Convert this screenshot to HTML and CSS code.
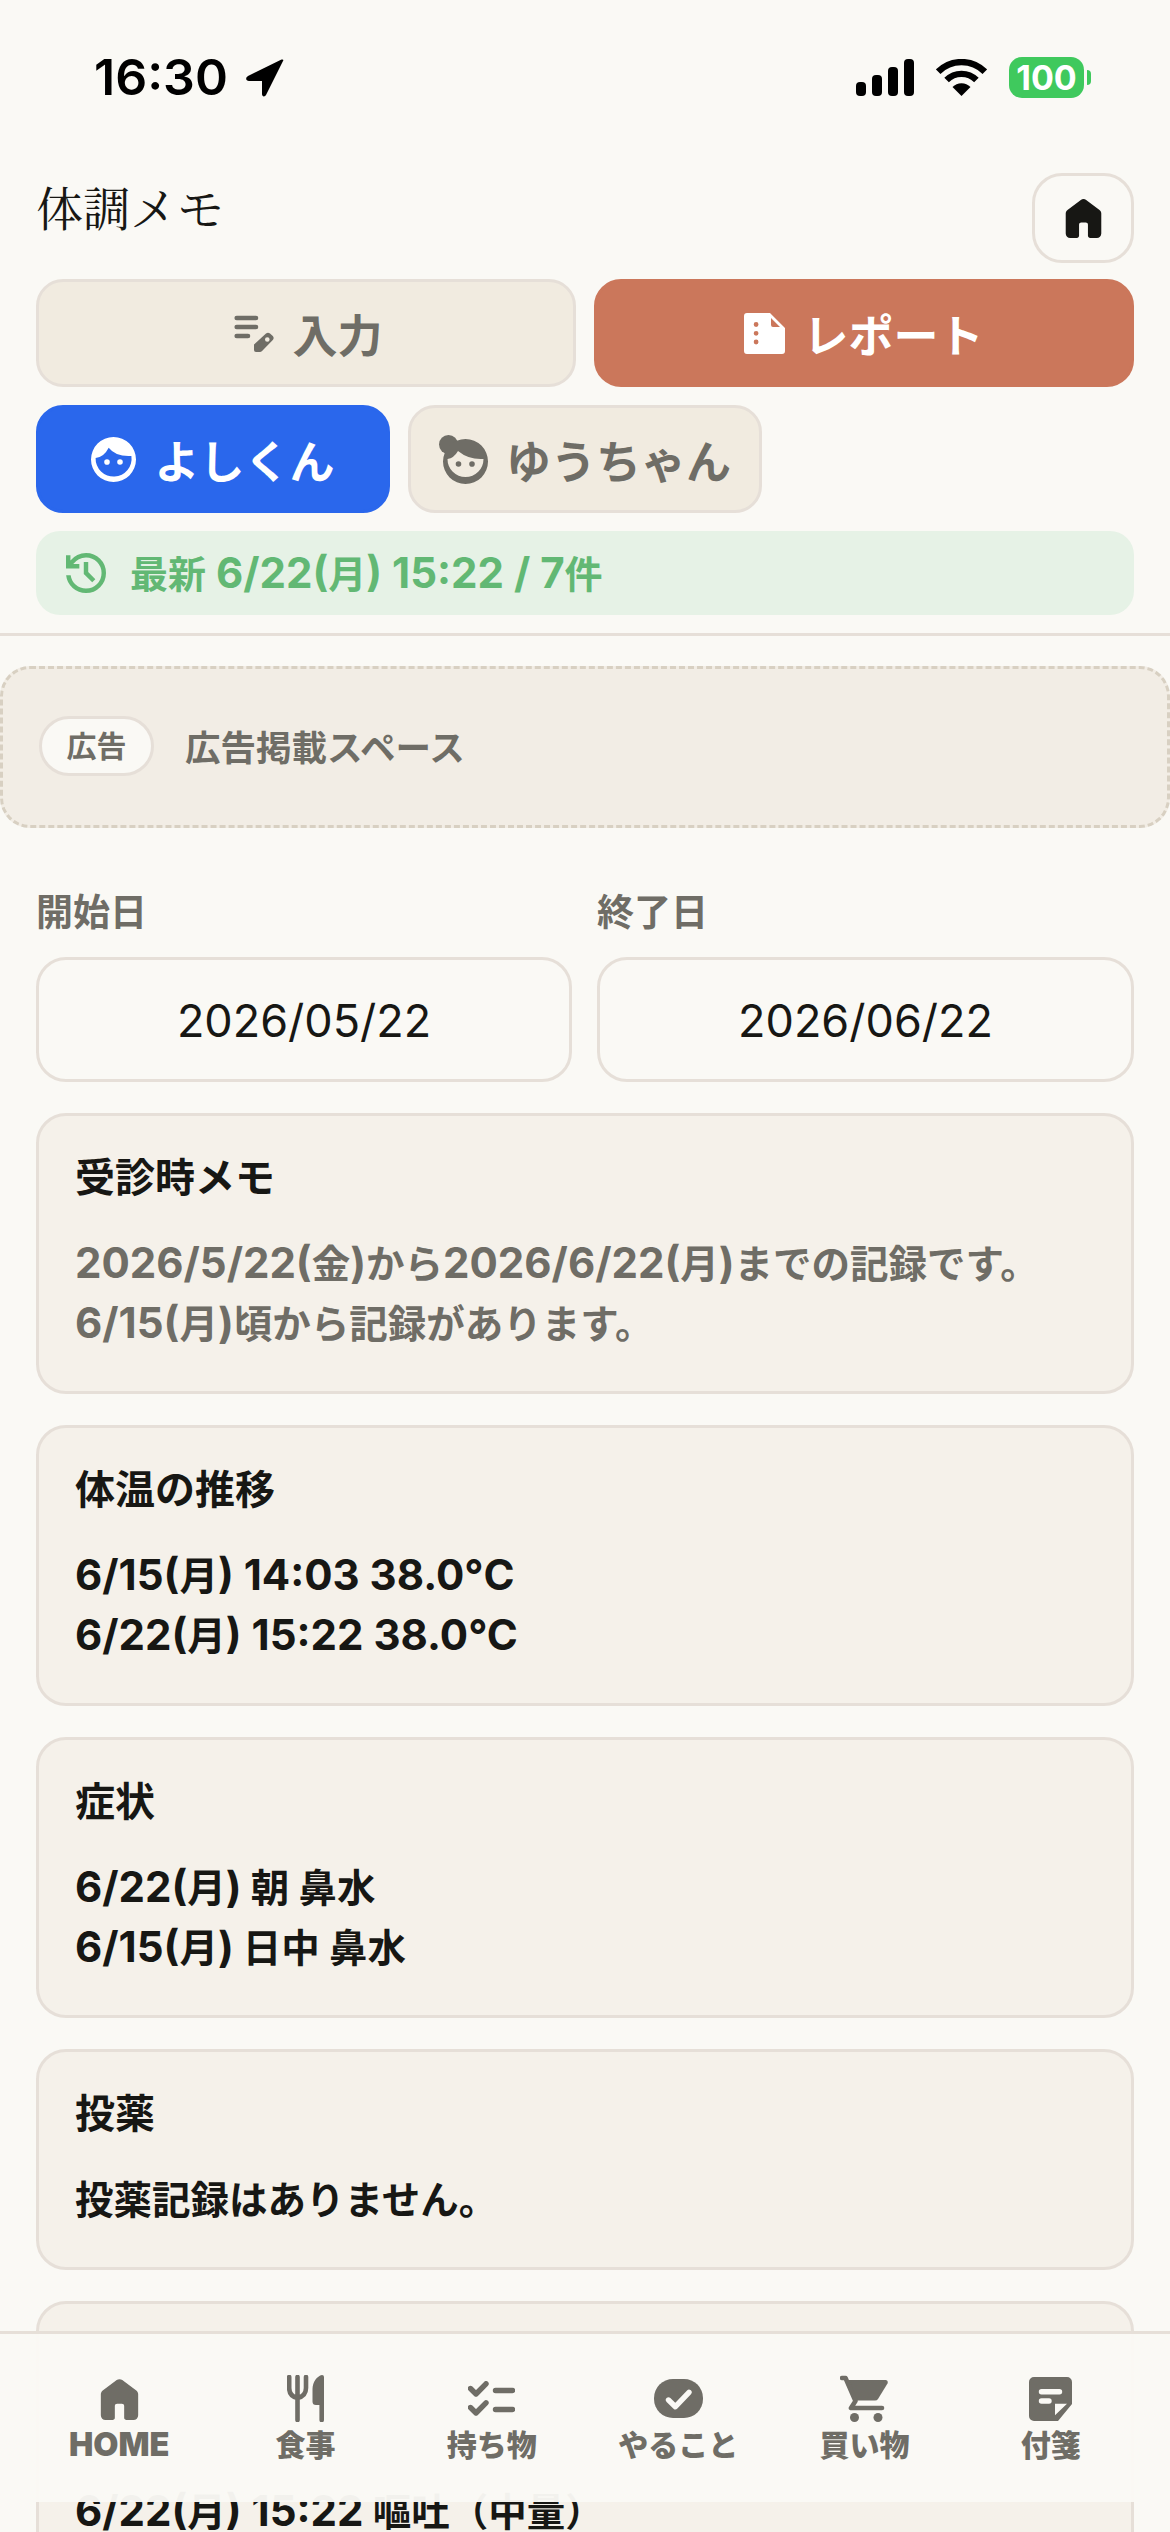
FILE: index.html
```html
<!DOCTYPE html>
<html lang="ja">
<head>
<meta charset="utf-8">
<title>体調メモ</title>
<link rel="stylesheet" href="styles.css">
</head>
<body>
<div class="page">
  <div class="status">
    <div class="status-left">
      <span class="time">16:30</span>
      <svg class="ico" width="38" height="38" viewBox="0 0 38 38"><path d="M37 2C38 1 37 0 35 .8L2 17C-1 19 0 22 3 22H16V35C16 38 19 38 20 36Z"/></svg>
    </div>
    <div class="status-right">
      <svg class="ico" width="58" height="37" viewBox="0 0 58 37"><rect x="0" y="23" width="10" height="14" rx="4"/><rect x="16" y="16" width="10" height="21" rx="4"/><rect x="32" y="8" width="10" height="29" rx="4"/><rect x="48" y="0" width="10" height="37" rx="4"/></svg>
      <svg class="wifi" width="51" height="37" viewBox="0 0 51 37"><path class="wifi-arc" d="M2.2 12.7A33 33 0 0 1 48.8 12.7"/><path class="wifi-arc" d="M10.6 21.1A21 21 0 0 1 40.4 21.1"/><path class="ico" d="M25.5 37L16.5 28A12.5 12.5 0 0 1 34.5 28Z"/></svg>
      <div class="battery">100</div>
    </div>
  </div>

  <header class="header">
    <h1 class="title">体調メモ</h1>
    <button class="home-btn">
      <svg class="ico-dark" width="37" height="40" viewBox="4 3 16 18"><path d="M4 19v-9q0-.475.213-.9t.587-.7l6-4.5q.525-.4 1.2-.4t1.2.4l6 4.5q.375.275.588.7T20 10v9q0 .825-.588 1.413T18 21h-3q-.425 0-.712-.288T14 20v-5q0-.425-.288-.712T13 14h-2q-.425 0-.712.288T10 15v5q0 .425-.288.712T9 21H6q-.825 0-1.412-.587T4 19Z"/></svg>
    </button>
  </header>

  <div class="controls">
    <div class="mode-row">
      <button class="btn btn-input">
        <svg class="ico-grey" width="40" height="37" viewBox="0 0 40 37"><path class="line-grey" d="M2.7 3H22M2.7 12H22M2.7 21H14"/><path fill-rule="evenodd" d="M20 35V29.500L32 18.500Q34 16.800 36 18.500L38.800 21Q40.500 23 38.800 25L27.800 36.200Q27 37 26 37H22Q20 37 20 35ZM31 24.500a2.300 2.300 0 1 0 4.600 0a2.300 2.300 0 1 0-4.600 0Z"/></svg>
        <span>入力</span>
      </button>
      <button class="btn btn-report">
        <svg class="ico-white" width="41" height="41" viewBox="0 0 41 41"><path fill-rule="evenodd" d="M3 0H26L41 15V38a3 3 0 0 1-3 3H3a3 3 0 0 1-3-3V3a3 3 0 0 1 3-3ZM27 5L36 14H29a2 2 0 0 1-2-2ZM9.700 11.500a2.400 2.400 0 1 0 4.800 0a2.400 2.400 0 1 0-4.800 0ZM9.700 20.300a2.400 2.400 0 1 0 4.800 0a2.400 2.400 0 1 0-4.800 0ZM9.700 29a2.400 2.400 0 1 0 4.800 0a2.400 2.400 0 1 0-4.800 0Z"/></svg>
        <span>レポート</span>
      </button>
    </div>
    <div class="child-row">
      <button class="btn btn-active">
        <svg class="ico-white" width="45" height="45" viewBox="0 0 45 45"><path fill-rule="evenodd" d="M22.500 0a22.500 22.500 0 1 0 0 45a22.500 22.500 0 1 0 0-45ZM4.600 21Q13 20 17.700 10.700Q25 20 40.400 19A18 18 0 1 1 4.600 21ZM13.200 25a2.800 2.800 0 1 0 5.600 0a2.800 2.800 0 1 0-5.600 0ZM26.200 25a2.800 2.800 0 1 0 5.600 0a2.800 2.800 0 1 0-5.600 0Z"/></svg>
        <span>よしくん</span>
      </button>
      <button class="btn">
        <svg class="ico-grey" width="49" height="49" viewBox="0 0 49 49"><circle cx="9.500" cy="9.500" r="9.500"/><path fill-rule="evenodd" d="M26.500 4a22.500 22.500 0 1 0 0 45a22.500 22.500 0 1 0 0-45ZM8.500 24Q15 23 19 16Q30 25 44.500 24A18 18 0 1 1 8.500 24ZM16.700 29a2.800 2.800 0 1 0 5.600 0a2.800 2.800 0 1 0-5.600 0ZM30.200 29a2.800 2.800 0 1 0 5.600 0a2.800 2.800 0 1 0-5.600 0Z"/></svg>
        <span>ゆうちゃん</span>
      </button>
    </div>
    <div class="latest">
      <svg class="ico-green" width="40" height="40" viewBox="3 3 18 18"><path d="M12 21q-3.450 0-6.012-2.287T3.050 13H5.100q.35 2.600 2.313 4.300T12 19q2.925 0 4.963-2.037T19 12q0-2.925-2.037-4.962T12 5q-1.725 0-3.225.8T6.250 8H9v2H3V4h2v2.350q1.275-1.600 3.113-2.475T12 3q3.750 0 6.375 2.625T21 12q0 3.750-2.625 6.375T12 21Zm2.800-4.800L11 12.400V7h2v4.600l3.200 3.200l-1.400 1.400Z"/></svg>
      <span class="latest-text">最新<span class="n"> 6/22(</span>月<span class="n">) 15:22 / 7</span>件</span>
    </div>
  </div>

  <div class="ad">
    <span class="ad-badge">広告</span>
    <span class="ad-text">広告掲載スペース</span>
  </div>

  <div class="dates">
    <div class="date-field">
      <label class="date-label">開始日</label>
      <div class="date-input">2026/05/22</div>
    </div>
    <div class="date-field">
      <label class="date-label">終了日</label>
      <div class="date-input">2026/06/22</div>
    </div>
  </div>

  <section class="card">
    <h2 class="card-title">受診時メモ</h2>
    <p class="card-text card-text-muted"><span class="n">2026/5/22(</span>金<span class="n">)</span>から<span class="n">2026/6/22(</span>月<span class="n">)</span>までの記録です。<br><span class="n">6/15(</span>月<span class="n">)</span>頃から記録があります。</p>
  </section>
  <section class="card">
    <h2 class="card-title">体温の推移</h2>
    <p class="card-text"><span class="n">6/15(</span>月<span class="n">) 14:03 38.0°C</span><br><span class="n">6/22(</span>月<span class="n">) 15:22 38.0°C</span></p>
  </section>
  <section class="card">
    <h2 class="card-title">症状</h2>
    <p class="card-text"><span class="n">6/22(</span>月<span class="n">)</span> 朝 鼻水<br><span class="n">6/15(</span>月<span class="n">)</span> 日中 鼻水</p>
  </section>
  <section class="card">
    <h2 class="card-title">投薬</h2>
    <p class="card-text">投薬記録はありません。</p>
  </section>
  <section class="card card-last">
    <p class="card-text"><span class="n">6/22(</span>月<span class="n">) 15:22</span> 嘔吐（中量）</p>
  </section>

  <nav class="tabbar">
    <a class="tab">
      <span class="tab-icon"><svg class="ico-grey" width="39" height="42" viewBox="4 3 16 18"><path d="M4 19v-9q0-.475.213-.9t.587-.7l6-4.5q.525-.4 1.200-.4t1.200.4l6 4.500q.375.275.588.7T20 10v9q0 .825-.588 1.413T18 21h-3q-.425 0-.712-.288T14 20v-5q0-.425-.288-.712T13 14h-2q-.425 0-.712.288T10 15v5q0 .425-.288.712T9 21H6q-.825 0-1.412-.587T4 19Z"/></svg></span>
      <span class="tab-label tab-label-latin">HOME</span>
    </a>
    <a class="tab">
      <span class="tab-icon"><svg class="ico-grey" width="37" height="47" viewBox="0 0 37 47"><path class="line-grey" d="M2.200 2V13Q2.200 21 10.500 23V45M10.500 2V23M19 2V13Q19 21 10.500 23"/><path d="M35 0a2 2 0 0 1 2 2V45a2.300 2.300 0 0 1-4.600 0V30H29a3.500 3.500 0 0 1-3.500-3.500V14C25.500 7 30 1 35 0Z"/></svg></span>
      <span class="tab-label">食事</span>
    </a>
    <a class="tab">
      <span class="tab-icon"><svg width="47" height="35" viewBox="0 0 47 35"><path class="line-grey line-thick" d="M2.500 7.500L8 13L18 2.800M2.500 26.500L8 32L18 21.800M27.500 9.500H44.500M27.500 28.500H44.500"/></svg></span>
      <span class="tab-label">持ち物</span>
    </a>
    <a class="tab">
      <span class="tab-icon"><svg class="ico-grey" width="49" height="39" viewBox="0 0 49 39"><rect width="49" height="39" rx="19"/><path class="line-bg" d="M14.500 21L21.400 27.700L35 13.300"/></svg></span>
      <span class="tab-label">やること</span>
    </a>
    <a class="tab">
      <span class="tab-icon"><svg class="ico-grey" width="48" height="47" viewBox="0 0 48 47"><path d="M6 5H46Q48.500 5.500 47.500 8.500L38 24Q37 25.500 35 25.500H15.500Z"/><path class="line-grey" d="M2 3H5.500L15.500 26L11 33H42"/><circle cx="14.500" cy="42.500" r="4.500"/><circle cx="38" cy="42.500" r="4.500"/></svg></span>
      <span class="tab-label">買い物</span>
    </a>
    <a class="tab">
      <span class="tab-icon"><svg class="ico-grey" width="43" height="44" viewBox="0 0 43 44"><path fill-rule="evenodd" d="M5 0H38a5 5 0 0 1 5 5V27L29 44H5a5 5 0 0 1-5-5V5a5 5 0 0 1 5-5ZM38 26.700H26V38.300Z"/><path class="line-bg" d="M12.500 14.700H30.500M12.500 24H20"/></svg></span>
      <span class="tab-label">付箋</span>
    </a>
  </nav>
</div>
</body>
</html>
```
FILE: styles.css
```css
* { box-sizing: border-box; }
html, body { margin: 0; padding: 0; }
body {
  background: #faf9f5;
  color: #171714;
  font-family: Inter, "Noto Sans CJK JP", sans-serif;
}
.page {
  position: relative;
  width: 1170px;
  height: 2532px;
  overflow: hidden;
  background: #faf9f5;
}
h1, h2, p { margin: 0; }
.n { font-size: 42px; line-height: 1; }

.ico { fill: #000; }
.ico-dark { fill: #171714; }
.ico-grey { fill: #6f6d66; }
.ico-white { fill: #fff; }
.ico-green { fill: #62b874; }
.line-grey { fill: none; stroke: #6f6d66; stroke-width: 4.6; stroke-linecap: round; stroke-linejoin: round; }
.line-thick { stroke-width: 5.4; }
.line-bg { fill: none; stroke: #faf9f5; stroke-width: 5.4; stroke-linecap: round; stroke-linejoin: round; }

.status {
  height: 173px;
  padding: 57px 86px 0 94px;
  display: flex;
  justify-content: space-between;
  align-items: flex-start;
}
.status-left { display: flex; align-items: center; gap: 18px; height: 41px; }
.time { font-size: 50px; font-weight: 600; line-height: 41px; color: #000; }
.status-right { display: flex; align-items: center; gap: 22px; height: 41px; }
.wifi-arc { fill: none; stroke: #000; stroke-width: 6.4; }
.battery {
  position: relative;
  width: 75px;
  height: 41px;
  border-radius: 13px;
  background: #3fc95d;
  color: #fff;
  font-size: 34px;
  font-weight: 700;
  line-height: 41px;
  text-align: center;
}
.battery::after {
  content: "";
  position: absolute;
  left: 78px;
  top: 13px;
  width: 4px;
  height: 15px;
  border-radius: 0 8px 8px 0;
  background: #3fc95d;
}

.header {
  height: 90px;
  margin: 0 36px 16px;
  display: flex;
  justify-content: space-between;
  align-items: flex-start;
}
.title {
  font-family: "Noto Serif CJK JP", "Noto Sans CJK JP", serif;
  font-size: 47px;
  font-weight: 400;
  line-height: 66px;
  color: #171714;
}
.home-btn {
  width: 102px;
  height: 90px;
  padding: 0;
  border: 3px solid #e6dfd8;
  border-radius: 30px;
  background: #faf9f5;
  display: flex;
  align-items: center;
  justify-content: center;
}

.controls {
  padding: 0 36px 18px;
  border-bottom: 3px solid #e6dfd8;
  display: flex;
  flex-direction: column;
  gap: 18px;
}
.mode-row { display: grid; grid-template-columns: 1fr 1fr; gap: 18px; }
.child-row { display: grid; grid-template-columns: repeat(3, 1fr); gap: 18px; }
.btn {
  height: 108px;
  padding: 0;
  border: 3px solid #e6dfd8;
  border-radius: 27px;
  background: #f1ebe0;
  color: #6f6d66;
  font-family: inherit;
  font-size: 45px;
  font-weight: 600;
  display: flex;
  align-items: center;
  justify-content: center;
  gap: 18px;
}
.btn-input { padding-left: 5px; }
.btn-report { background: #cb775b; border-color: #cb775b; color: #fff; }
.btn-active { background: #2a67ec; border-color: #2a67ec; color: #fff; }
.latest {
  height: 84px;
  padding: 0 30px;
  border-radius: 24px;
  background: #e6f2e6;
  color: #62b874;
  font-size: 38px;
  font-weight: 700;
  display: flex;
  align-items: center;
  gap: 24px;
}
.latest-text { margin-bottom: 4px; }

.ad {
  height: 162px;
  margin-top: 30px;
  padding: 0 36px 3px;
  border: 3px dashed #d8d0c2;
  border-radius: 30px;
  background: #f2ede5;
  display: flex;
  align-items: center;
  gap: 31px;
  color: #6f6d66;
  font-weight: 700;
}
.ad-badge {
  width: 115px;
  height: 60px;
  border: 3px solid #e6dfd8;
  border-radius: 30px;
  background: #faf9f5;
  font-size: 30px;
  line-height: 54px;
  text-align: center;
}
.ad-text { font-size: 35.5px; }

.dates {
  margin: 60px 36px 31px;
  display: grid;
  grid-template-columns: 536px 537px;
  column-gap: 25px;
}
.date-label {
  display: block;
  margin-bottom: 19px;
  color: #6f6d66;
  font-size: 37px;
  font-weight: 700;
  line-height: 50px;
}
.date-input {
  height: 125px;
  border: 3px solid #e6dfd8;
  border-radius: 30px;
  background: #faf9f5;
  font-size: 45px;
  line-height: 122px;
  text-align: center;
}

.card {
  margin: 0 36px 31px;
  padding: 36px 36px 37px;
  border: 3px solid #e6dfd8;
  border-radius: 30px;
  background: #f5f1ea;
}
.card-title { font-size: 40px; font-weight: 700; line-height: 52px; margin-bottom: 30px; }
.card-text { font-size: 38.5px; font-weight: 700; line-height: 60px; }
.card-text-muted { color: #6f6d66; }
.card-last { padding-top: 178px; }

.tabbar {
  position: absolute;
  left: 0;
  right: 0;
  bottom: 30px;
  height: 171px;
  padding: 41px 26px 0;
  border-top: 3px solid #e6dfd8;
  background: rgba(250, 249, 245, 0.97);
  display: grid;
  grid-template-columns: repeat(6, 1fr);
}
.tab { display: flex; flex-direction: column; align-items: center; gap: 4px; color: #6f6d66; }
.tab-icon { height: 47px; display: flex; align-items: center; justify-content: center; }
.tab-label { font-size: 30px; font-weight: 900; line-height: 38px; }
.tab-label-latin { font-size: 32.5px; }
```
